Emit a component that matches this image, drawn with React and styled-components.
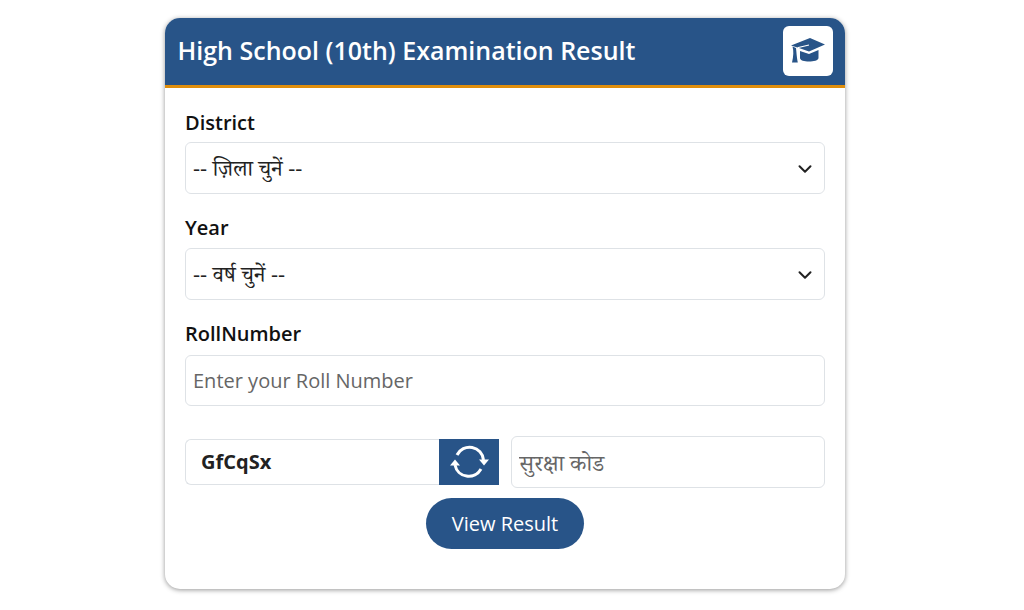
import React from 'react';
import styled, { createGlobalStyle } from 'styled-components';
import { ChevronDown } from 'lucide-react';

const GlobalStyle = createGlobalStyle`
  * {
    box-sizing: border-box;
  }

  body {
    margin: 0;
    background: #fff;
    font-family: "Open Sans", "Noto Serif Devanagari", "Lohit Devanagari", FreeSerif, serif;
    color: #111;
  }
`;

const CapIcon = () => (
  <svg width="36" height="27" viewBox="0 0 36 27" fill="#285488">
    <path d="M1 8.5 20 1l15 6.5-16 7-10-3.5z" />
    <path d="M19 8 8.5 10.5 6 13" fill="none" stroke="#fff" strokeWidth="1.2" />
    <path d="M2.5 9.5 6 11c.5 4 .5 7 1.8 14.5H2C3.500 19 3.800 14 2.500 9.500z" />
    <path d="M10 14l9 3 9.500-4v8c0 4.500-18.500 5-18.500 0z" />
  </svg>
);

const RefreshIcon = () => (
  <svg width="40" height="40" viewBox="0 0 40 40" fill="#fff">
    <path d="M8 13A14 14 0 0 1 34.500 18" fill="none" stroke="#fff" strokeWidth="3" />
    <path d="M30 17.500h10l-5 6z" />
    <path d="M6 23A14 14 0 0 0 32 27" fill="none" stroke="#fff" strokeWidth="3" />
    <path d="M1 23.500h10L6 17.500z" />
  </svg>
);

const App = () => {
  return (
    <>
      <GlobalStyle />
      <Page>
        <Card>
          <Header>
            <Title>High School (10th) Examination Result</Title>
            <IconBox>
              <CapIcon />
            </IconBox>
          </Header>
          <Body>
            <FirstLabel htmlFor="district">District</FirstLabel>
            <SelectWrap>
              <Select id="district" defaultValue="">
                <option value="">-- ज़िला चुनें --</option>
              </Select>
              <Chevron size={22} strokeWidth={2.2} />
            </SelectWrap>

            <Label htmlFor="year">Year</Label>
            <SelectWrap>
              <Select id="year" defaultValue="">
                <option value="">-- वर्ष चुनें --</option>
              </Select>
              <Chevron size={22} strokeWidth={2.2} />
            </SelectWrap>

            <Label htmlFor="roll">RollNumber</Label>
            <RollInput id="roll" placeholder="Enter your Roll Number" />

            <CaptchaRow>
              <CaptchaGroup>
                <CaptchaCode>GfCqSx</CaptchaCode>
                <RefreshButton type="button" aria-label="Refresh">
                  <RefreshIcon />
                </RefreshButton>
              </CaptchaGroup>
              <CaptchaInput placeholder="सुरक्षा कोड" />
            </CaptchaRow>

            <Actions>
              <SubmitButton type="button">View Result</SubmitButton>
            </Actions>
          </Body>
        </Card>
      </Page>
    </>
  );
};

const Page = styled.main`
  display: flex;
  justify-content: center;
  padding: 18px 14px 21px 0;
`;

const Card = styled.section`
  width: 680px;
  height: 571px;
  border-radius: 15px;
  background: #fff;
  overflow: hidden;
  box-shadow: 0 1px 5px rgba(0, 0, 0, 0.42);
`;

const Header = styled.header`
  display: flex;
  align-items: center;
  justify-content: space-between;
  height: 70px;
  padding: 0 12px 2px 12.5px;
  background: #285488;
  border-bottom: 3px solid #e08e0b;
`;

const Title = styled.h1`
  margin: 0 0 2px;
  font-size: 25px;
  font-weight: 600;
  color: #fff;
`;

const IconBox = styled.div`
  display: flex;
  align-items: center;
  justify-content: center;
  width: 50px;
  height: 50px;
  border-radius: 6px;
  background: #fff;
`;

const Body = styled.div`
  padding: 20px 20px 0;
`;

const Label = styled.label`
  display: block;
  height: 34px;
  font-size: 20px;
  font-weight: 600;
  line-height: 28px;
  color: #111;
`;

const FirstLabel = styled(Label)`
  line-height: 30px;
`;

const SelectWrap = styled.div`
  position: relative;
  margin-bottom: 20px;
`;

const fieldStyles = `
  display: block;
  width: 100%;
  height: 52px;
  padding: 0 7px;
  border: 1px solid #dee2e6;
  border-radius: 6px;
  background: #fff;
  font-family: "Open Sans", "Noto Serif Devanagari", "Lohit Devanagari", FreeSerif, serif;
  font-size: 20px;
  color: #222;
  outline: none;

  &::placeholder {
    color: #666;
    opacity: 1;
  }
`;

const Select = styled.select`
  ${fieldStyles}
  padding-bottom: 2px;
  font-size: 22px;
  appearance: none;
`;

const Chevron = styled(ChevronDown)`
  position: absolute;
  top: 16px;
  right: 9px;
  color: #222;
  pointer-events: none;
`;

const RollInput = styled.input`
  ${fieldStyles}
  height: 51px;
  margin-top: 1px;
`;

const CaptchaRow = styled.div`
  display: grid;
  grid-template-columns: 314px 314px;
  column-gap: 12px;
  align-items: center;
  margin-top: 30px;
`;

const CaptchaGroup = styled.div`
  display: flex;
  height: 46px;
`;

const CaptchaCode = styled.div`
  flex: 1;
  display: flex;
  align-items: center;
  padding: 0 0 1px 15px;
  border: 1px solid #dee2e6;
  border-right: 0;
  border-radius: 6px 0 0 6px;
  font-size: 20px;
  font-weight: 700;
  color: #222;
`;

const RefreshButton = styled.button`
  display: flex;
  align-items: center;
  justify-content: center;
  width: 60px;
  padding: 0;
  border: 0;
  background: #285488;
  color: #fff;
`;

const CaptchaInput = styled.input`
  ${fieldStyles}
  font-size: 23px;
`;

const Actions = styled.div`
  display: flex;
  justify-content: center;
  margin-top: 10px;
  padding-right: 1px;
`;

const SubmitButton = styled.button`
  width: 158px;
  height: 51px;
  padding: 0 0 0 1px;
  border: 0;
  border-radius: 26px;
  background: #285488;
  font-family: "Open Sans", serif;
  font-size: 20px;
  color: #fff;
`;

export default App;
